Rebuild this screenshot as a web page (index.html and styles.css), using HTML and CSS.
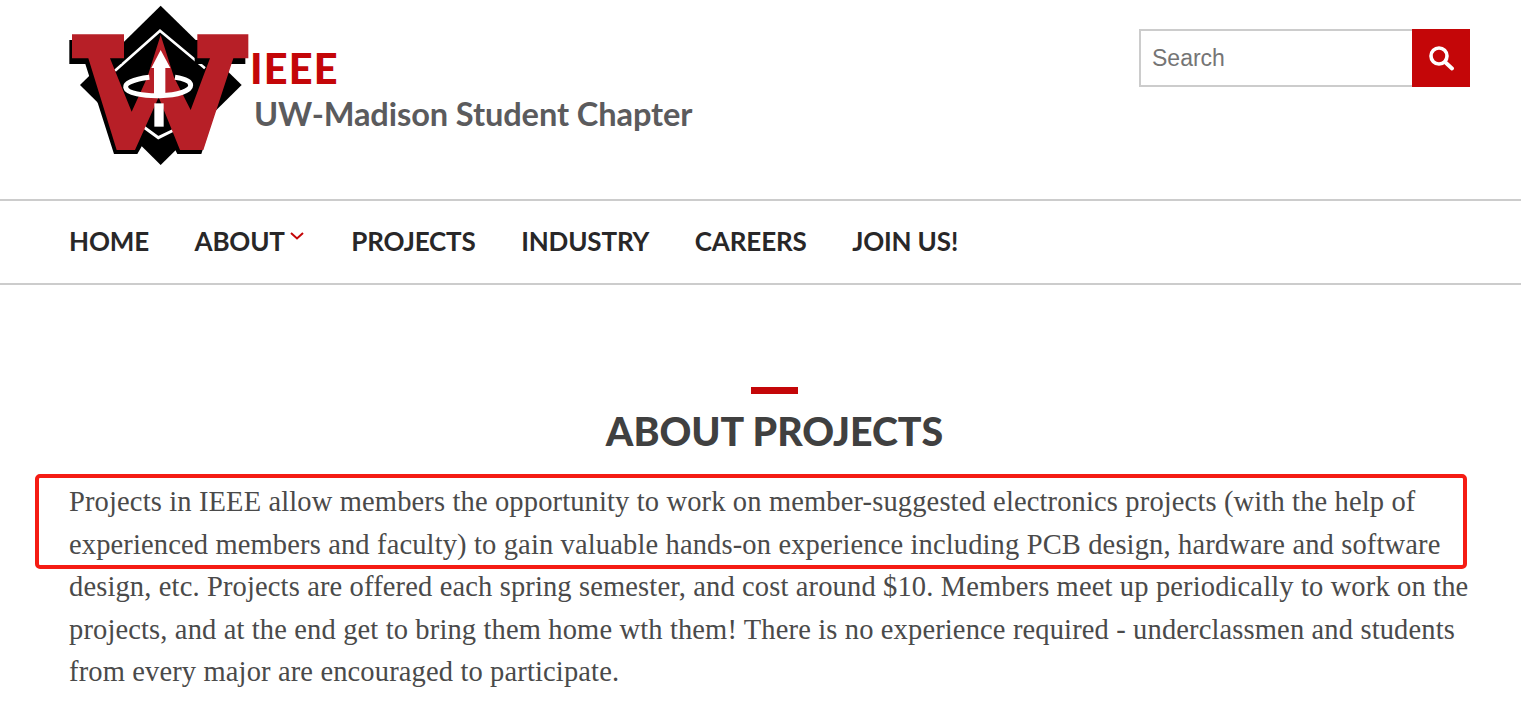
FILE: index.html
```html
<!DOCTYPE html>
<html lang="en">
<head>
<meta charset="utf-8">
<title>About Projects - IEEE UW-Madison Student Chapter</title>
<link rel="stylesheet" href="styles.css">
</head>
<body>
<header class="site-header">
  <a class="brand" href="#">
    <svg class="logo" viewBox="27 15 540 480" aria-hidden="true">
      <path fill="#000" d="M302 17L545 255L302 495L60 255Z"/>
      <path fill="none" stroke="#fff" stroke-width="8" d="M165 212L300 92L435 205"/>
      <path fill="#000" d="M28 120H184V192H144L216 352L262 250H342L372 352L442 192H404V120H556V192H512L424 462H352L296 350L232 462H162L76 192H28Z"/>
      <path fill="none" stroke="#fff" stroke-width="9" d="M250 380L295 413L342 390"/>
      <path fill="#b71f27" d="M36 103H192V175H150L215 335L262 232L302 105L342 232L392 330L450 175H412V103H565V175H520L430 450H360L296 292L225 450H170L85 175H36Z"/>
      <path fill="#fff" d="M302 150L331 204H316V285H282V204H274Z"/>
      <path fill="none" stroke="#fff" stroke-width="15" d="M268 232C215 238 195 252 197 262C200 280 250 288 300 287C355 286 392 272 392 256C392 244 372 236 345 232"/>
      <path fill="#fff" d="M283 310H311V380H283Z"/>
    </svg>
    <span class="brand-text">
      <span class="brand-ieee">IEEE</span>
      <span class="brand-chapter">UW-Madison Student Chapter</span>
    </span>
  </a>
  <form class="search">
    <input class="search-input" type="text" placeholder="Search">
    <button class="search-button" type="button" aria-label="Search">
      <svg viewBox="0 0 26 26" class="search-icon" aria-hidden="true">
        <circle cx="11" cy="11" r="8" fill="none" stroke="#fff" stroke-width="3.6"/>
        <path d="M17 17L24 23.5" fill="none" stroke="#fff" stroke-width="3.8" stroke-linecap="round"/>
      </svg>
    </button>
  </form>
</header>
<nav class="main-nav">
  <a href="#">HOME</a>
  <a href="#" class="has-sub">ABOUT<svg class="chevron" viewBox="0 0 14 8" aria-hidden="true"><path d="M1 1L7 6.5L13 1" fill="none" stroke="#c40608" stroke-width="2"/></svg></a>
  <a href="#">PROJECTS</a>
  <a href="#">INDUSTRY</a>
  <a href="#">CAREERS</a>
  <a href="#">JOIN US!</a>
</nav>
<main class="content">
  <div class="accent"></div>
  <h1 class="title">ABOUT PROJECTS</h1>
  <div class="copy">
    <div class="highlight"></div>
    <span class="line">Projects in IEEE allow members the opportunity to work on member-suggested electronics projects (with the help of</span>
    <span class="line">experienced members and faculty) to gain valuable hands-on experience including PCB design, hardware and software</span>
    <span class="line">design, etc. Projects are offered each spring semester, and cost around $10. Members meet up periodically to work on the</span>
    <span class="line">projects, and at the end get to bring them home wth them! There is no experience required - underclassmen and students</span>
    <span class="line">from every major are encouraged to participate.</span>
  </div>
</main>
</body>
</html>
```
FILE: styles.css
```css
* { box-sizing: border-box; }
html, body { margin: 0; padding: 0; background: #fff; overflow: hidden; }
body { font-family: "Lato", "Liberation Sans", sans-serif; color: #444; }
a { text-decoration: none; color: inherit; }

.site-header {
  height: 199px;
  display: flex;
  justify-content: space-between;
  align-items: flex-start;
  padding: 5px 51px 0 69px;
}
.brand { display: flex; align-items: flex-start; }
.logo { width: 180px; height: 160px; flex: none; }
.brand-text { display: flex; flex-direction: column; margin-left: 1px; padding-top: 39px; }
.brand-ieee { font-size: 41.5px; font-weight: 900; color: #c40608; line-height: 48px; letter-spacing: 1.2px; }
.brand-chapter { font-size: 32.6px; font-weight: 700; color: #5b5b5d; line-height: 40px; margin: 2px 0 0 4px; letter-spacing: -0.1px; }

.search { display: flex; margin-top: 24px; }
.search-input {
  width: 273px; height: 58px;
  border: 2px solid #ccc; border-right: 0;
  padding: 0 11px;
  font-family: "Liberation Sans", sans-serif;
  font-size: 23px; color: #444; outline: none; background: #fff;
}
.search-input::placeholder { color: #757575; opacity: 1; }
.search-button {
  width: 58px; height: 58px; border: 0; padding: 0;
  background: #c40608;
  display: flex; align-items: center; justify-content: center;
}
.search-icon { width: 26px; height: 26px; }

.main-nav {
  height: 86px;
  border-top: 2px solid #ccc;
  border-bottom: 2px solid #ccc;
  display: flex; align-items: center;
  gap: 45.5px;
  padding: 0 0 2px 69px;
  font-size: 26px; font-weight: 700; color: #282728; letter-spacing: -0.15px;
}
.has-sub { display: flex; align-items: center; }
.chevron { width: 14px; height: 8px; margin: -10px 2px 0 5px; }

.content { padding: 102px 41px 0 69px; display: flex; flex-direction: column; align-items: center; }
.accent { width: 47px; height: 7px; background: #c40608; }
.title { margin: 14px 0 0; font-size: 39.3px; line-height: 46px; font-weight: 900; color: #404040; letter-spacing: 0; }

.copy { position: relative; width: 100%; margin-top: 27px; font-family: "Liberation Serif", serif; font-size: 28.5px; line-height: 42.5px; letter-spacing: 0.14px; color: #4a4a4a; }
.line { display: block; white-space: nowrap; }
.highlight {
  position: absolute; left: -34px; top: -7px; width: 1432px; height: 95px;
  border: 4px solid #f51c14; border-radius: 5px;
}
```
